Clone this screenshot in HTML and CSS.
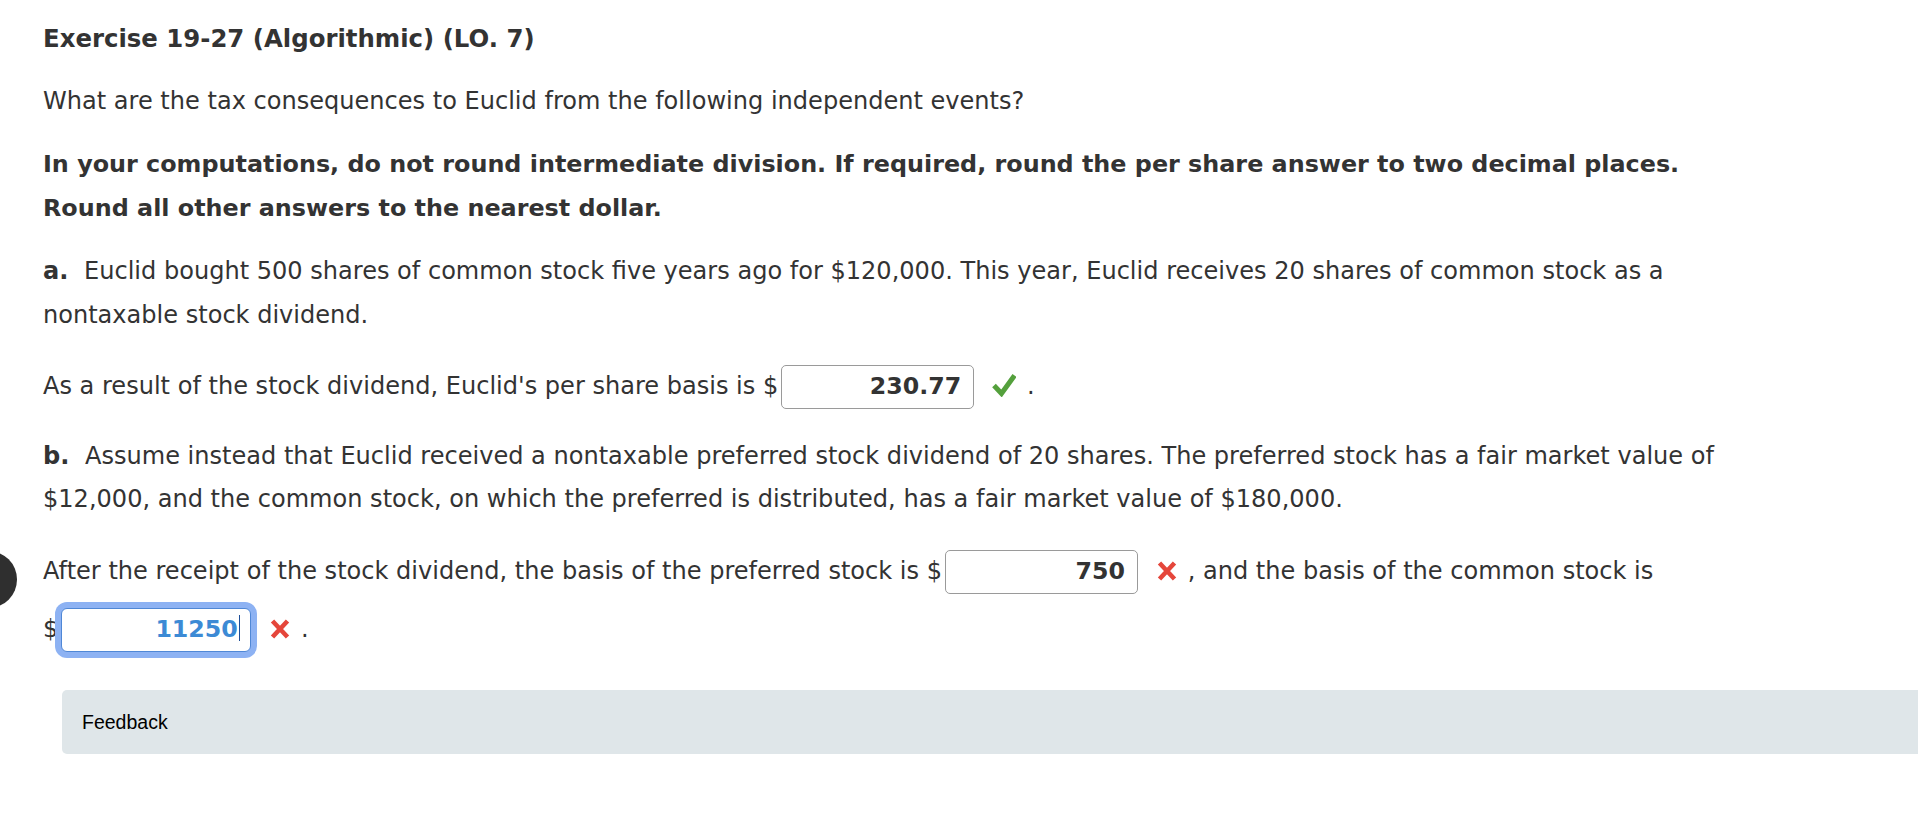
FILE: index.html
```html
<!DOCTYPE html>
<html lang="en">
<head>
<meta charset="utf-8">
<title>Exercise 19-27</title>
<link rel="stylesheet" href="styles.css">
</head>
<body>
<div class="edge-dot"></div>
<main class="page">
  <h1 class="title">Exercise 19-27 (Algorithmic) (LO. 7)</h1>
  <p class="para first">What are the tax consequences to Euclid from the following independent events?</p>
  <p class="para strong">In your computations, do not round intermediate division. If required, round the per share answer to two decimal places.<br>Round all other answers to the nearest dollar.</p>
  <p class="para"><b class="label">a.</b> Euclid bought 500 shares of common stock five years ago for $120,000. This year, Euclid receives 20 shares of common stock as a<br>nontaxable stock dividend.</p>
  <p class="para input-line">As a result of the stock dividend, Euclid's per share basis is $<span class="answer">230.77</span><svg class="icon check" viewBox="0 0 24 24" width="24" height="24"><polyline points="2,12.5 9.5,20.5 22.5,2.5" fill="none" stroke="#54a03c" stroke-width="5" stroke-linejoin="miter"/></svg> .</p>
  <p class="para"><b class="label">b.</b> Assume instead that Euclid received a nontaxable preferred stock dividend of 20 shares. The preferred stock has a fair market value of<br>$12,000, and the common stock, on which the preferred is distributed, has a fair market value of $180,000.</p>
  <p class="para input-line">After the receipt of the stock dividend, the basis of the preferred stock is $<span class="answer">750</span><svg class="icon cross" viewBox="0 0 20 20" width="20" height="20"><path d="M2.5 2 L17.5 18 M17.5 2 L2.5 18" fill="none" stroke="#e5463b" stroke-width="4.6"/></svg> , and the basis of the common stock is<br>$<span class="answer focused">11250<span class="caret"></span></span><svg class="icon cross" viewBox="0 0 20 20" width="20" height="20"><path d="M2.5 2 L17.5 18 M17.5 2 L2.5 18" fill="none" stroke="#e5463b" stroke-width="4.6"/></svg> .</p>
  <section class="feedback">Feedback</section>
</main>
</body>
</html>
```
FILE: styles.css
```css
html, body {
  margin: 0;
  padding: 0;
  background: #ffffff;
}
body {
  margin: 8px;
  font-family: "DejaVu Sans", Verdana, sans-serif;
  color: #333333;
  overflow: hidden;
}
.page {
  padding-left: 35px;
}
.edge-dot {
  position: absolute;
  left: -40px;
  top: 551px;
  width: 57px;
  height: 57px;
  border-radius: 50%;
  background: #2f2f2f;
}
.title {
  font-size: 24.4px;
  font-weight: bold;
  line-height: 43.5px;
  margin: 9px 0 19.5px;
  white-space: nowrap;
}
.para {
  font-size: 24.05px;
  line-height: 43.5px;
  margin: 0 0 20px;
  white-space: nowrap;
}
.para.first {
  margin-bottom: 19.5px;
}
.strong {
  font-weight: bold;
  font-size: 23.85px;
}
.label {
  font-weight: bold;
  margin-right: 8px;
}
.input-line {
  line-height: 58px;
  margin-bottom: 19.5px;
}
.answer {
  display: inline-block;
  box-sizing: border-box;
  width: 193px;
  height: 44px;
  vertical-align: middle;
  border: 1.5px solid #9a9a9a;
  border-radius: 5px;
  background: #ffffff;
  text-align: right;
  font-weight: bold;
  font-size: 23.7px;
  line-height: 41px;
  padding-right: 12px;
  margin-left: 3px;
  color: #333333;
  position: relative;
}
.answer.focused {
  width: 190px;
  margin-left: 3px;
  border: 1.5px solid #4f87d6;
  box-shadow: 0 0 0 6px #8db2f3;
  border-radius: 6px;
  color: #3c8ad5;
  padding-right: 10px;
}
.caret {
  display: inline-block;
  width: 1.5px;
  height: 26px;
  background: #1d4f99;
  vertical-align: -4px;
  margin-left: 1px;
}
.icon {
  vertical-align: middle;
  display: inline-block;
}
.check {
  margin-left: 18px;
  margin-right: 3px;
  position: relative;
  top: -2px;
}
.cross {
  margin-left: 19px;
  margin-right: 3px;
  position: relative;
  top: -1px;
}
.feedback {
  margin: 32px -7px 0 19px;
  height: 64px;
  box-sizing: border-box;
  background: #dfe6e9;
  border-radius: 5px 0 0 5px;
  padding-left: 20px;
  font-family: "Liberation Sans", Arial, sans-serif;
  font-size: 19.5px;
  line-height: 64px;
  color: #000000;
}
```
